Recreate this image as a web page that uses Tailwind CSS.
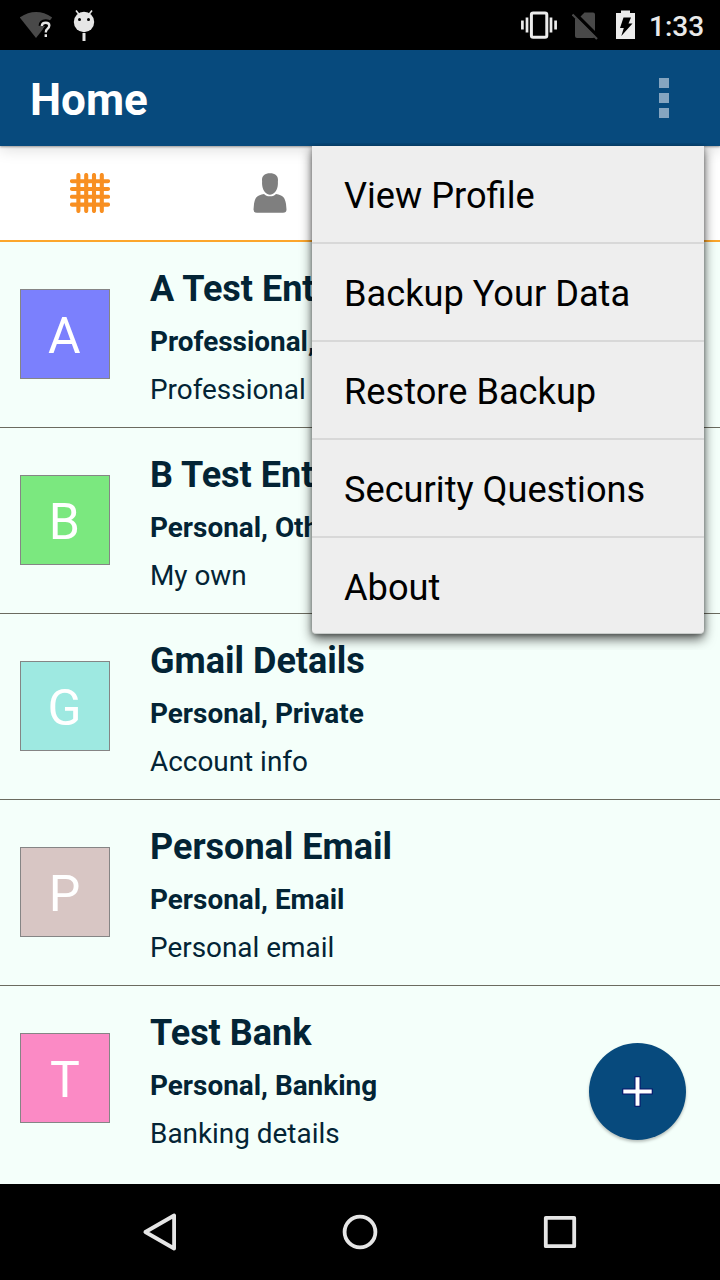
<!DOCTYPE html>
<html lang="en">
<head>
<meta charset="utf-8">
<title>Home</title>
<script src="https://cdn.jsdelivr.net/npm/@tailwindcss/browser@4"></script>
</head>
<body class="w-[720px] h-[1280px] overflow-hidden bg-black font-['Roboto',sans-serif]">
<div class="relative w-[720px] h-[1280px] flex flex-col overflow-hidden">

  <!-- Status bar -->
  <header class="h-[50px] shrink-0 bg-black flex items-center justify-between pl-[20px] pr-[16px]">
    <div class="flex">
      <svg width="34" height="50" viewBox="20 0 34 50" fill="none">
        <path d="M19.800 17.500Q36 6.700 52.200 17.500L36 38Z" fill="#494949"/>
        <path d="M41.800 26Q42 22.500 45.800 22.500Q49.300 22.500 49.300 25.600Q49.300 27.500 47 29Q45.700 30 45.700 32.200M45.700 34.200V37" stroke="#000" stroke-width="6.500"/>
        <path d="M41.800 26Q42 22.700 45.800 22.700Q49.300 22.700 49.300 25.600Q49.300 27.500 47.300 29Q45.800 30 45.800 32.400M45.800 34.200V37" stroke="#e6e6e6" stroke-width="2.400"/>
      </svg>
      <svg class="ml-[18px]" width="24" height="50" viewBox="72 0 24 50">
        <circle cx="84" cy="22" r="10.200" fill="#e6e6e6"/>
        <path d="M76 10.500L79.500 15M92 10.500L88.500 15" stroke="#e6e6e6" stroke-width="1.600"/>
        <path d="M84 33V41" stroke="#e6e6e6" stroke-width="3"/>
        <circle cx="79.500" cy="19.500" r="1.500"/><circle cx="88.500" cy="19.500" r="1.500"/>
      </svg>
    </div>
    <div class="flex items-center">
      <svg width="36" height="50" viewBox="521 0 36 50">
        <rect x="531.400" y="12.900" width="15.400" height="24.400" rx="1.800" fill="none" stroke="#ececec" stroke-width="3"/>
        <path d="M527 17.500V32.500M551 17.500V32.500M522.400 20.500V29.500M555.600 20.500V29.500" stroke="#ececec" stroke-width="2.700"/>
      </svg>
      <svg class="ml-[15px]" width="27" height="50" viewBox="572 0 27 50">
        <path d="M579 18L584.500 12.500H593Q595 12.500 595 14.500V36Q595 38 593 38H577Q575 38 575 36V19Z" fill="#494949"/>
        <path d="M573.500 12L598 36.500" stroke="#000" stroke-width="3.500"/>
        <path d="M572.500 14.500L597 39" stroke="#494949" stroke-width="2.200"/>
      </svg>
      <svg class="ml-[17px]" width="19" height="50" viewBox="616 0 19 50">
        <path d="M616 13H621V10.500H630V13H635V39H616Z" fill="#ececec"/>
        <path d="M623.500 17.500H631L628.500 23.500H632.500L621.300 36L623.800 28H620Z"/>
      </svg>
      <span class="ml-[14px] w-[55px] mt-[2px] text-[28px] leading-[33px] font-medium text-[#e9e9e9] whitespace-nowrap">1:33</span>
    </div>
  </header>

  <!-- App bar -->
  <div class="relative z-10 h-[96px] shrink-0 bg-[#074a7d] flex items-center justify-between pl-[30px] pr-[51px] shadow-[0_1px_2px_rgba(0,0,0,0.35),0_4px_14px_rgba(0,0,0,0.13)]">
    <h1 class="mt-[3px] text-[44px] leading-[52px] font-bold text-white">Home</h1>
    <div class="flex flex-col gap-[5px] w-[10px]">
      <i class="size-[10px] bg-[#85a5c0]"></i><i class="size-[10px] bg-[#85a5c0]"></i><i class="size-[10px] bg-[#85a5c0]"></i>
    </div>
  </div>

  <!-- Tabs -->
  <nav class="h-[96px] shrink-0 bg-white border-b-2 border-[#fca62c] flex">
    <div class="w-[180px] flex justify-center items-center">
      <svg width="40" height="40" viewBox="0 0 40 40" stroke="#f88f21" stroke-width="4.100" stroke-linecap="round">
        <path d="M8.400 2V38M16.200 2V38M24 2V38M31.800 2V38M2 8.200H38M2 16H38M2 23.800H38M2 31.600H38"/>
      </svg>
    </div>
    <div class="w-[180px] flex justify-center items-center">
      <svg width="34" height="40" viewBox="0 0 34 40" fill="#7f7f7f">
        <path d="M9 7C9 2.500 12 .200 17 .200S25 2.500 25 7C24.700 9 25.200 10 24.700 13C24 18 20.500 21.700 17 21.700S10 18 9.300 13C8.800 10 9.300 9 9 7Z"/>
        <path d="M11 21C12.500 22.500 14 23.300 17 23.300S21.500 22.500 23 21C30 22.300 32 24.500 33 31L33.500 36.500Q33.500 39.700 30 39.700H4Q.500 39.700 .500 36.500L1 31C2 24.500 4 22.300 11 21Z"/>
      </svg>
    </div>
  </nav>

  <!-- Entries -->
  <main class="h-[942px] shrink-0 bg-[#f4fffa] overflow-hidden text-[#032435]">
    <section class="h-[186px] border-b border-[#6b6b5f] flex items-start pl-[20px]">
      <div class="mt-[47px] size-[90px] pr-[1.500px] border border-[#858585] bg-[#7b80fd] text-white text-[50px] leading-[92px] text-center">A</div>
      <div class="ml-[40px] pt-[26px] flex flex-col gap-[15px] whitespace-nowrap">
        <h2 class="text-[36px] leading-[42px] font-bold">A Test Entry</h2>
        <p class="text-[27.900px] leading-[33px] font-bold">Professional, Work</p>
        <p class="text-[27.900px] leading-[33px]">Professional</p>
      </div>
    </section>
    <section class="h-[186px] border-b border-[#6b6b5f] flex items-start pl-[20px]">
      <div class="mt-[47px] size-[90px] pr-[1.500px] border border-[#858585] bg-[#7be87f] text-white text-[50px] leading-[92px] text-center">B</div>
      <div class="ml-[40px] pt-[26px] flex flex-col gap-[15px] whitespace-nowrap">
        <h2 class="text-[36px] leading-[42px] font-bold">B Test Entry</h2>
        <p class="text-[27.900px] leading-[33px] font-bold">Personal, Other</p>
        <p class="text-[27.900px] leading-[33px]">My own</p>
      </div>
    </section>
    <section class="h-[186px] border-b border-[#6b6b5f] flex items-start pl-[20px]">
      <div class="mt-[47px] size-[90px] pr-[1px] border border-[#858585] bg-[#9ee9e1] text-white text-[50px] leading-[92px] text-center">G</div>
      <div class="ml-[40px] pt-[26px] flex flex-col gap-[15px] whitespace-nowrap">
        <h2 class="text-[36px] leading-[42px] font-bold">Gmail Details</h2>
        <p class="text-[27.900px] leading-[33px] font-bold">Personal, Private</p>
        <p class="text-[27.900px] leading-[33px]">Account info</p>
      </div>
    </section>
    <section class="h-[186px] border-b border-[#6b6b5f] flex items-start pl-[20px]">
      <div class="mt-[47px] size-[90px] pr-[1px] border border-[#858585] bg-[#d8c6c4] text-white text-[50px] leading-[92px] text-center">P</div>
      <div class="ml-[40px] pt-[26px] flex flex-col gap-[15px] whitespace-nowrap">
        <h2 class="text-[36px] leading-[42px] font-bold">Personal Email</h2>
        <p class="text-[27.900px] leading-[33px] font-bold">Personal, Email</p>
        <p class="text-[27.900px] leading-[33px]">Personal email</p>
      </div>
    </section>
    <section class="h-[198px] flex items-start pl-[20px]">
      <div class="mt-[47px] size-[90px] border border-[#858585] bg-[#fb8ac5] text-white text-[50px] leading-[92px] text-center">T</div>
      <div class="ml-[40px] pt-[26px] flex flex-col gap-[15px] whitespace-nowrap">
        <h2 class="text-[36px] leading-[42px] font-bold">Test Bank</h2>
        <p class="text-[27.900px] leading-[33px] font-bold">Personal, Banking</p>
        <p class="text-[27.900px] leading-[33px]">Banking details</p>
      </div>
    </section>
  </main>

  <!-- Navigation bar -->
  <footer class="h-[96px] shrink-0 bg-black flex items-center justify-center">
    <svg width="440" height="40" viewBox="140 1212 440 40" fill="none" stroke="#e6e6e6" stroke-width="3.800" stroke-linejoin="round">
      <path d="M145.400 1232L174.100 1215.500V1248.500Z"/>
      <circle cx="360" cy="1232" r="15.400"/>
      <rect x="545.800" y="1217.800" width="28.400" height="28.400"/>
    </svg>
  </footer>

  <!-- Add button -->
  <button class="absolute left-[589px] top-[1043px] size-[97px] rounded-full bg-[#074a7d] shadow-[0_2px_3px_rgba(0,0,0,0.25)] flex items-center justify-center">
    <svg width="35" height="35" viewBox="0 0 35 35">
      <path d="M17.500 2.300V32.700M2.300 17.500H32.700" stroke="#08106b" stroke-width="6"/>
      <path d="M17.500 3.300V31.700M3.300 17.500H31.700" stroke="#fff" stroke-width="4"/>
    </svg>
  </button>

  <!-- Overflow menu -->
  <ul class="absolute z-20 left-[312px] top-[146px] w-[392px] h-[488px] bg-[#eee] rounded-b-[4px] border-b border-[#c9cdcb] shadow-[0_5px_12px_rgba(0,0,0,0.65),0_1px_4px_rgba(0,0,0,0.3)] text-[36.200px] leading-[42px] text-black whitespace-nowrap [clip-path:inset(-3px_-20px_-16px_-20px)]">
    <li class="h-[98px] pl-[32px] pt-[29px] border-b-2 border-[#d8d8d8]">View Profile</li>
    <li class="h-[98px] pl-[32px] pt-[29px] border-b-2 border-[#d8d8d8]">Backup Your Data</li>
    <li class="h-[98px] pl-[32px] pt-[29px] border-b-2 border-[#d8d8d8]">Restore Backup</li>
    <li class="h-[98px] pl-[32px] pt-[29px] border-b-2 border-[#d8d8d8]">Security Questions</li>
    <li class="h-[95px] pl-[32px] pt-[29px]">About</li>
  </ul>
</div>
</body>
</html>
